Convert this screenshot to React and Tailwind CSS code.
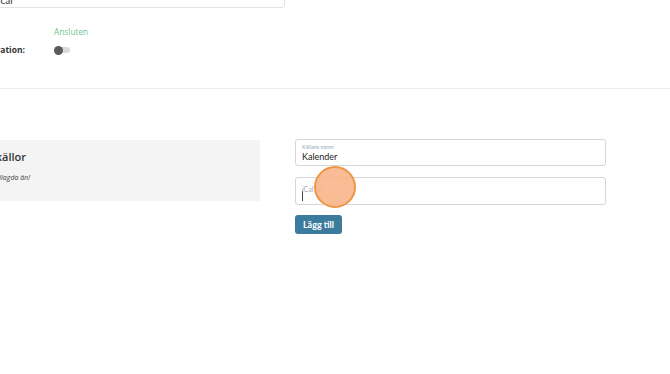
import React from "react";

export default function App() {
  return (
    <div className="relative w-[670px] h-[374px] overflow-hidden bg-white" style={{ fontFamily: "'Open Sans', sans-serif" }}>
      {/* Inställningar (top, cut off) */}
      <div className="h-[88px] flex flex-col">
        <div className="-mt-[22px] -ml-[10px] w-[295px] h-[30px] border border-[#e2e2e2] rounded-[3px] bg-white flex items-end px-[7px] pb-[2px]">
          <span className="text-[10px] leading-none text-[#333]" style={{ fontFamily: "Lato, sans-serif" }}>ical</span>
        </div>
        <div className="mt-[18px] flex items-center h-[12px]">
          <div className="w-[54px]" />
          <span className="text-[8.3px] font-medium text-[#72c48a]">Ansluten</span>
        </div>
        <div className="mt-[6px] flex items-center h-[12px]">
          <div className="w-[54px] relative h-full">
            <span className="absolute right-[29px] top-1/2 -translate-y-1/2 whitespace-nowrap text-[8.5px] font-bold text-[#333]">Kalenderintegration:</span>
          </div>
          <div className="relative w-[16px] h-[9px] flex items-center">
            <div className="absolute left-[3px] right-0 h-[6px] rounded-full bg-[#dadada]" />
            <div className="relative w-[9px] h-[9px] rounded-full bg-[#5b5b5b]" />
          </div>
        </div>
      </div>

      <div className="h-px bg-[#ececec]" />

      {/* Externa källor */}
      <div className="mt-[51px] flex gap-[35px]">
        <div className="w-[260px] h-[61px] bg-[#f4f4f4] relative">
          <div className="absolute right-[234px] top-[10px] whitespace-nowrap text-[11px] font-semibold text-[#333] leading-[14px]">Externa källor</div>
          <div className="absolute right-[230px] top-[33px] whitespace-nowrap text-[7px] italic text-[#444]">Inga källor tillagda än!</div>
        </div>

        <div className="w-[311px] flex flex-col" style={{ fontFamily: "Lato, sans-serif" }}>
          <div className="-mt-px h-[27px] border border-[#d6d6d6] rounded-[3px] px-[6px] pt-[4px]">
            <div className="text-[5.5px] leading-[7px] text-[#8fa9bb]">Källans namn</div>
            <div className="text-[9px] leading-[12px] font-normal text-[#222]">Kalender</div>
          </div>
          <div className="mt-[11px] h-[28px] border border-[#d6d6d6] rounded-[3px] px-[6px] pt-[7px] relative">
            <div className="text-[7px] leading-[8px] text-[#aaa]">iCal url</div>
            <div className="w-px h-[10px] bg-[#444] -mt-[2px]" />
          </div>
          <div className="mt-[10px] flex">
            <button className="block w-[47px] h-[19px] rounded-[3px] bg-[#3b7c9d] text-white text-[9px] font-bold">Lägg till</button>
          </div>
        </div>
      </div>

      {/* klick-markering */}
      <div className="absolute left-[314px] top-[166px] w-[42px] h-[42px] rounded-full bg-[#f8b58a]/90 border-2 border-[#ee9546]" />
    </div>
  );
}
